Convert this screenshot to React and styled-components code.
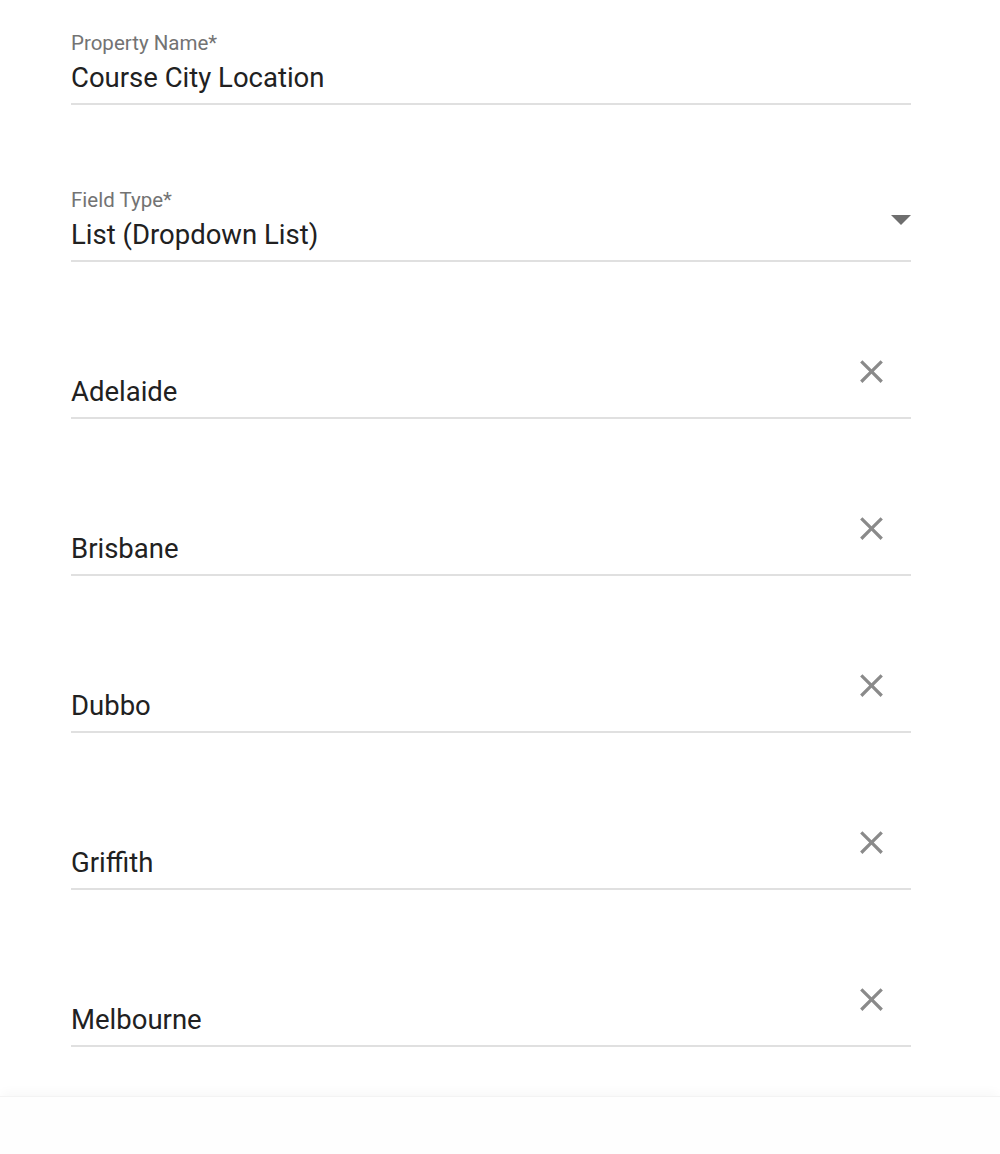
import React from 'react';
import styled, { createGlobalStyle } from 'styled-components';

const GlobalStyle = createGlobalStyle`
  html, body {
    margin: 0;
    padding: 0;
    background: #fff;
    font-family: Roboto, 'Noto Sans', sans-serif;
  }
`;

const Page = styled.div`
  width: 1000px;
  min-height: 1154px;
  display: flex;
  flex-direction: column;
  background: #fff;
`;

const Form = styled.div`
  display: flex;
  flex-direction: column;
  padding: 31px 89px 49px 71px;
`;

const Field = styled.div`
  display: flex;
  flex-direction: column;
  margin-top: ${(p) => p.gap || 0}px;
  border-bottom: 2px solid #e0e0e0;
  padding-bottom: 9px;
`;

const Label = styled.label`
  font-size: 20.5px;
  line-height: 24px;
  color: #737373;
  margin-bottom: 6px;
`;

const ValueRow = styled.div`
  display: flex;
  align-items: ${(p) => (p.bottom ? 'flex-end' : 'flex-start')};
  justify-content: space-between;
`;

const Value = styled.div`
  font-size: 27.5px;
  line-height: 33px;
  color: #212121;
`;

const Arrow = styled.svg`
  width: 20px;
  height: 10px;
  margin-top: -3px;
  fill: #6e6e6e;
`;

const RemoveButton = styled.button`
  width: 39px;
  height: 39px;
  margin: 0 20px 17px 0;
  padding: 0;
  border: none;
  background: transparent;
  display: flex;
  align-items: center;
  justify-content: center;
  svg {
    width: 39px;
    height: 39px;
    fill: #8a8a8a;
  }
`;

const Footer = styled.div`
  flex: 1;
  background: #fefefe;
  border-top: 1px solid #f3f3f3;
  box-shadow: 0 -6px 10px -2px rgba(0, 0, 0, 0.03);
`;

const cities = ['Adelaide', 'Brisbane', 'Dubbo', 'Griffith', 'Melbourne'];

const CloseIcon = () => (
  <svg viewBox="0 0 24 24">
    <path d="M19 6.41L17.59 5 12 10.59 6.41 5 5 6.41 10.59 12 5 17.59 6.41 19 12 13.41 17.59 19 19 17.59 13.41 12z" />
  </svg>
);

export default function App() {
  return (
    <Page>
      <GlobalStyle />
      <Form>
        <Field>
          <Label>Property Name*</Label>
          <Value>Course City Location</Value>
        </Field>
        <Field gap={83}>
          <Label>Field Type*</Label>
          <ValueRow>
            <Value>List (Dropdown List)</Value>
            <Arrow viewBox="0 0 20 10">
              <path d="M0 0h20L10 10z" />
            </Arrow>
          </ValueRow>
        </Field>
        {cities.map((city) => (
          <Field key={city} gap={90}>
            <ValueRow bottom>
              <Value>{city}</Value>
              <RemoveButton aria-label={`Remove ${city}`}>
                <CloseIcon />
              </RemoveButton>
            </ValueRow>
          </Field>
        ))}
      </Form>
      <Footer />
    </Page>
  );
}
